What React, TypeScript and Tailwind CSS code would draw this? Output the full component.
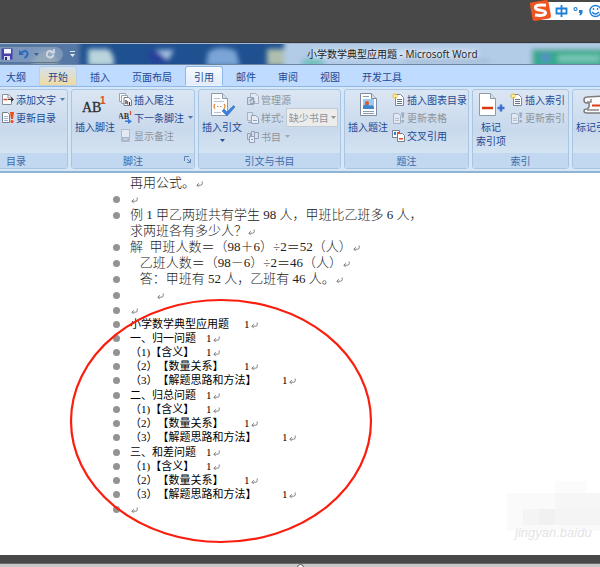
import type { ReactNode } from "react"

const tabs = ["大纲", "开始", "插入", "页面布局", "引用", "邮件", "审阅", "视图", "开发工具"]

const tabStyles: Record<string, string> = {
  开始: "border-[#b9cfe4] bg-gradient-to-b from-[#d3e1f0] to-[#efdb9f]",
  引用: "border-[#8fb8e8] border-b-[#edf4fc] bg-gradient-to-b from-[#f4f9ff] to-[#e3edf9]",
}

const problem = [
  { bullet: false, text: "再用公式。" },
  { bullet: true, text: "" },
  { bullet: true, text: "例 1 甲乙两班共有学生 98 人，甲班比乙班多 6 人，", open: true },
  { bullet: false, text: "求两班各有多少人？" },
  { bullet: true, text: "解  甲班人数＝（98＋6）÷2＝52（人）" },
  { bullet: true, text: "   乙班人数＝（98－6）÷2＝46（人）" },
  { bullet: true, text: "   答：甲班有 52 人，乙班有 46 人。" },
  { bullet: true, text: "        " },
]

const sections = [
  ["一、归一问题", "（1)【含义】", "（2）【数量关系】", "（3）【解题思路和方法】"],
  ["二、归总问题", "（1)【含义】", "（2）【数量关系】", "（3）【解题思路和方法】"],
  ["三、和差问题", "（1)【含义】", "（2）【数量关系】", "（3）【解题思路和方法】"],
]

function Caret({ className = "" }: { className?: string }) {
  return (
    <svg viewBox="0 0 5 3" className={`h-[3px] w-[5px] shrink-0 fill-current ${className}`}>
      <path d="M0 0h5L2.500 3z" />
    </svg>
  )
}

function Return() {
  return (
    <svg viewBox="0 0 7 7" className="ml-px mt-[2px] h-[7px] w-[7px] shrink-0" fill="none" stroke="#757575" strokeWidth="0.900">
      <path d="M6.200 .5v2.200q0 1.500-1.500 1.500H1M2.800 2.200L.8 4.200l2 2" />
    </svg>
  )
}

function Small({ children }: { children: ReactNode }) {
  return (
    <svg viewBox="0 0 13 13" className="h-[13px] w-[13px] shrink-0" fill="none">
      {children}
    </svg>
  )
}

const page = "M3.500 1.500h5l3 3v8h-8z"

function AddTextIcon() {
  return (
    <Small>
      <path d="M1.500 1.500h6l3 3v7h-9z" fill="#fff" stroke="#8a8f98" />
      <path d="M7 1.500v3.500h3" stroke="#8a8f98" />
      <path d="M2.500 6.500h4" stroke="#e04a2a" strokeWidth="1.500" />
      <path d="M7 6.500h4M10.500 4.500l2 2-2 2z" fill="#444" stroke="#444" />
    </Small>
  )
}

function UpdateIcon() {
  return (
    <Small>
      <path d="M1.500 1.500h5l2 2v8h-7z" fill="#fff" stroke="#777f8c" />
      <path d="M3 5.500h4M3 7.500h4M3 9.500h4" stroke="#9fb4d4" />
      <path d="M9 1h4l-1 7h-2z" fill="#ee4a1c" />
      <circle cx="11" cy="10.500" r="1.600" fill="#ee4a1c" />
    </Small>
  )
}

function RefreshOffIcon() {
  return (
    <Small>
      <path d="M1.500 2.500h5l2 2v8h-7z" fill="#e1e8f1" stroke="#a4b2c6" />
      <path d="M3 7.500h4M3 9.500h4" stroke="#b5bfcd" />
      <path d="M9 1.500h3.500l-1 5.500h-1.500zM9.500 9h2.500v2.500H9.500z" fill="#9facc0" />
    </Small>
  )
}

function EndnoteIcon() {
  return (
    <Small>
      <path d="M.5 .5h6v8h-6z" fill="#fff" stroke="#9aa4b3" />
      <path d="M2.500 2.500h6v8h-6z" fill="#fff" stroke="#9aa4b3" />
      <path d="M5 4.500h4.500l3 2.500v5.500H5z" fill="#fff" stroke="#777f8c" />
      <path d="M7 7v4M10.500 9v3" stroke="#333" strokeWidth="1.200" />
      <path d="M8.500 8v3.500" stroke="#e04a2a" strokeWidth="1.200" />
    </Small>
  )
}

function NextNoteIcon() {
  return (
    <Small>
      <text x="-1" y="8" fontSize="8" fontWeight="700" fill="#333" fontFamily="Liberation Serif, serif">AB</text>
      <path d="M11.500 0v4" stroke="#e04a2a" strokeWidth="1.200" />
      <path d="M6 9.500h3v-2l4 3-4 2.500v-2H6z" fill="#3b76d6" />
    </Small>
  )
}

function NotesIcon() {
  return (
    <Small>
      <path d="M2.500 .5h8v12h-8z" fill="#e3e9f2" stroke="#b0bccd" />
      <path d="M3 8h7v4H3z" fill="#a9b7cb" />
      <path d="M4.500 10h4" stroke="#e3eaf3" />
    </Small>
  )
}

function SourcesIcon() {
  return (
    <Small>
      <path d="M4.500 .5h5l3 3v7h-8z" fill="#e3e9f2" stroke="#a4b0c2" />
      <path d="M1.500 4.500h6v7h-6z" fill="#cfd9e6" stroke="#93a2b8" />
      <path d="M4 8.500q2-4 4.500-2M9 8q-2 4-4.500 2" stroke="#93a2b8" strokeWidth="1.500" />
    </Small>
  )
}

function StyleIcon() {
  return (
    <Small>
      <path d="M1.500 1.500h5v8h-5z" fill="#dfe6f0" stroke="#a4b2c6" />
      <path d="M5.500 4.500h4l3 2.500v5.500h-7z" fill="#e6ecf4" stroke="#93a2b8" />
      <path d="M7 9.500h4M2 11.500h3" stroke="#93a2b8" />
    </Small>
  )
}

function BiblioIcon() {
  return (
    <Small>
      <path d="M1.500 3.500h3v6h-3zM5.500 1.500h3v9h-3zM8.500 2.500h4v6h-4z" fill="#d5deea" stroke="#93a2b8" />
      <path d="M3.500 6.500h5v6h-5z" fill="#e3eaf3" stroke="#93a2b8" />
      <path d="M5 9.500h2" stroke="#93a2b8" />
    </Small>
  )
}

function SparkPageIcon() {
  return (
    <Small>
      <path d={page} fill="#fff" stroke="#7c8799" />
      <path d="M5 6.500h5M5 8.500h5M5 10.500h5" stroke="#66758c" />
      <path d="M3 0v6M0 3h6M1 1l4 4M5 1L1 5" stroke="#f0bf22" />
      <circle cx="3" cy="3" r="1.200" fill="#fff2a0" />
    </Small>
  )
}

function CrossRefIcon() {
  return (
    <Small>
      <path d="M.5 1.500h7v7h-7z" fill="#fff" stroke="#777f8c" />
      <path d="M5.500 4.500h5l2 2v6h-7z" fill="#fff" stroke="#777f8c" />
      <path d="M2 3h2v3H2z" fill="#3b76d6" />
      <path d="M5 3h2v2H5zM7 9h4v1.500H7z" fill="#e04a2a" />
    </Small>
  )
}

function FootnoteIcon() {
  return (
    <svg viewBox="0 0 26 30" className="h-[30px] w-[26px]">
      <text x="0" y="22" fontSize="14" fill="#2d2d2d" stroke="#2d2d2d" strokeWidth=".3" fontFamily="Liberation Serif, serif">AB</text>
      <text x="18" y="14" fontSize="10" fontWeight="700" fill="#e04a1c" fontFamily="Liberation Sans, sans-serif">1</text>
    </svg>
  )
}

function CitationIcon() {
  return (
    <svg viewBox="0 0 26 30" className="h-[30px] w-[26px]" fill="none">
      <path d="M2.500 3.500h11l5 5v17h-16z" fill="#fbfcfe" stroke="#8e9aae" />
      <path d="M13.500 3.500v5h5" fill="#d5deeb" stroke="#8e9aae" />
      <path d="M5 8.500h6M5 11.500h10M5 22.500h7" stroke="#b9c4d4" />
      <path d="M6 14q-2 2 0 5M15 14q2 2 0 5M8 16.500h1.500M11 16.500h1.500" stroke="#d98a3a" strokeWidth="1.200" />
      <path d="M13 21l2-2 3 3 6.500-6.500L26 17l-8 9z" fill="#3b82de" stroke="#2a66b8" strokeWidth=".5" />
    </svg>
  )
}

function CaptionIcon() {
  return (
    <svg viewBox="0 0 26 30" className="h-[30px] w-[26px]" fill="none">
      <path d="M5.500 3.500h11l5 5v17h-16z" fill="#fbfcfe" stroke="#7f8ba0" />
      <path d="M16.500 3.500v5h5" fill="#d5deeb" stroke="#7f8ba0" />
      <path d="M8 6.500h6M8 21.500h11M8 23.500h11" stroke="#8f9bae" />
      <path d="M8 9h11v10H8z" fill="#9cc8f2" />
      <path d="M8 19v-3l4-3 3 3 2-1 2 2v2z" fill="#3f86c8" />
      <circle cx="12" cy="13" r="2" fill="#e0592a" />
    </svg>
  )
}

function MarkEntryIcon() {
  return (
    <svg viewBox="0 0 28 30" className="h-[30px] w-[28px]" fill="none">
      <path d="M2.500 3.500h11l5 5v17h-16z" fill="#fff" stroke="#8e9aae" />
      <path d="M13.500 3.500v5h5" fill="#d5deeb" stroke="#8e9aae" />
      <path d="M5 18h11" stroke="#d93a14" strokeWidth="2.500" />
      <path d="M24 14.500v7M20.500 18h7" stroke="#3f6fd0" strokeWidth="2.500" />
    </svg>
  )
}

function MarkCitationIcon() {
  return (
    <svg viewBox="0 0 26 30" className="h-[30px] w-[26px] shrink-0" fill="none">
      <path d="M4 7q-3 0-3 3t3 3h2q1 5-2 6-3 0-3 2t3 2h14q4-1 3-7l-1-4q4 0 3-4-1-2-3-2z" fill="#fbfbfb" stroke="#7d7d7d" strokeWidth="1.500" />
      <path d="M4 12h4V9M4 20h12" stroke="#8a8a8a" strokeWidth="1.500" />
      <path d="M9 15.500h8" stroke="#d9401a" strokeWidth="2" />
    </svg>
  )
}

type ItemProps = { icon: ReactNode; label: string; off?: boolean; menu?: boolean }

function Item({ icon, label, off, menu }: ItemProps) {
  return (
    <button disabled={off} className={`flex h-[18px] items-center gap-[2px] whitespace-nowrap ${off ? "text-[#8f949c]" : "text-[#1e4a94]"}`}>
      {icon}
      <span>{label}</span>
      {menu && <Caret className="ml-[2px] opacity-70" />}
    </button>
  )
}

function Big({ icon, lines, menu }: { icon: ReactNode; lines: string[]; menu?: boolean }) {
  return (
    <button className="flex shrink-0 flex-col items-center whitespace-nowrap text-[#1e4a94]">
      {icon}
      {lines.map((l) => (
        <span key={l} className="block leading-[14px]">{l}</span>
      ))}
      {menu && <Caret className="mt-[5px]" />}
    </button>
  )
}

function Group({ title, className, launcher, children }: { title: string; className: string; launcher?: boolean; children: ReactNode }) {
  return (
    <section className={`flex h-20 shrink-0 flex-col overflow-hidden rounded-[3px] border border-[#a9c5e2] bg-gradient-to-b from-[#dbe6f3] via-[#c9d9ec] to-[#dceaf6] ${className}`}>
      <div className="flex flex-1 items-start gap-1 px-[3px]">{children}</div>
      <h2 className="relative h-[15px] bg-[#c1d8f0] text-center leading-[15px] text-[#3e6aaa]">
        {title}
        {launcher && (
          <button aria-label={title} className="absolute right-[3px] top-[3px]">
            <svg viewBox="0 0 7 7" className="h-[7px] w-[7px]" fill="none" stroke="#5f83b4">
              <path d="M.5 5V.5H5M3 3l3 3M6.500 3v3.500H3" />
            </svg>
          </button>
        )}
      </h2>
    </section>
  )
}

function InputBar() {
  return (
    <div className="absolute right-0 top-0 flex h-[21px] items-center">
      <svg viewBox="0 0 71 21" className="h-[21px] w-[71px]" fill="none">
        <path d="M12 2h59v18H12z" fill="#fff" />
        <path d="M1 4.500Q0 3 2 2.500L17 0q2 0 2.500 2L22 16q0 2-2 2.500L6 21q-2 0-2.500-2z" fill="#ee5420" />
        <path d="M17 5.200Q6 4 6.500 8c.4 3 10 1.500 10 4.800 0 3-6 3-10.500 2.200" stroke="#fff" strokeWidth="3" />
        <path d="M27.500 8.500h10v5h-10zM32.500 5v12" stroke="#1e7fd8" strokeWidth="1.800" />
        <circle cx="46.500" cy="9" r="1.500" stroke="#1e7fd8" strokeWidth="1.200" />
        <path d="M50 10h3.500v2.500q0 2-2.500 3l-.8-1q1-.8 1-1.500H50z" fill="#1e7fd8" />
        <circle cx="66.500" cy="11" r="5.500" stroke="#1e7fd8" strokeWidth="1.400" />
        <path d="M64.500 8v2M68.500 8v2M63 12q3.500 4 7 0" stroke="#1e7fd8" strokeWidth="1.300" />
      </svg>
    </div>
  )
}

function TitleBar() {
  return (
    <div className="relative h-[22px] overflow-hidden border-b border-t border-b-[#70869f] border-t-[#a9b9cd] bg-[#1f5090]">
      <svg viewBox="0 0 600 20" preserveAspectRatio="none" className="absolute inset-0 h-full w-full">
        <defs>
          <filter id="glass" x="-20%" y="-50%" width="140%" height="200%">
            <feGaussianBlur stdDeviation="2.500" />
          </filter>
        </defs>
        <g filter="url(#glass)">
          <path d="M-10-10h90v40H-10z" fill="#5577a6" />
          <path d="M284-10h330v40H284z" fill="#b2cbe7" />
          <path d="M32 20q4-14 20-14l6 14z" fill="#a9b9a4" />
          <path d="M88 5h20q7 5 6 17H88z" fill="#b9d4dc" />
          <path d="M148 7h25l-5 12h-18z" fill="#263f9c" />
          <path d="M156 6h18l-6 10z" fill="#a8c4e6" />
          <path d="M208 8q12-8 28-1l4 15h-34z" fill="#7aa5d6" />
          <path d="M267 5h17v17h-17z" fill="#aebfae" />
          <ellipse cx="313" cy="19" rx="12" ry="5" fill="#71bfc0" />
          <path d="M312 6h166v8H312z" fill="#d3e2f2" />
          <path d="M405 15h85v4h-85z" fill="#a3bad4" />
          <path d="M532 5h80v20h-80z" fill="#35a98d" />
          <path d="M541 9h9v9h-9z" fill="#5590c8" />
          <path d="M558 11h42v7h-42z" fill="#79c6b4" />
        </g>
      </svg>
      <div className="relative flex h-full items-center">
        <div className="flex h-[17px] w-[64px] items-center gap-[6px] rounded-r-full border border-l-0 border-[#5c7699] bg-[#8ca4c4]/70 pl-[1px]">
          <button aria-label="保存">
            <svg viewBox="0 0 12 12" className="h-3 w-3">
              <path d="M.5.5h11v11H.5z" fill="#4b3fa8" />
              <path d="M3 1h7v4.500H3z" fill="#f4f6ff" />
              <path d="M3 8h6v4H3z" fill="#d8dcf0" />
              <path d="M4 9h2v3H4z" fill="#2b2a6a" />
            </svg>
          </button>
          <button aria-label="撤消" className="flex items-center gap-[5px] text-[#375f98]">
            <svg viewBox="0 0 10 10" className="h-[10px] w-[10px]" fill="none" stroke="#2d68bd" strokeWidth="2">
              <path d="M2 4q5-4 6.500 0Q9 7 5.500 9" />
              <path d="M0 1v5h5z" fill="#2d68bd" stroke="none" />
            </svg>
            <Caret />
          </button>
          <button aria-label="重复">
            <svg viewBox="0 0 10 10" className="h-[10px] w-[10px]" fill="none" stroke="#d3d9e4" strokeWidth="1.800">
              <path d="M7.500 3Q4 .5 2 4q-1 4 3 4.500 3 0 3.500-3M5.500 3.500H9V0" />
            </svg>
          </button>
        </div>
        <button aria-label="自定义快速访问工具栏" className="ml-[6px] text-[#dce6f2]">
          <svg viewBox="0 0 5 6" className="h-[6px] w-[5px] fill-current">
            <path d="M0 0h5v1H0zM0 3h5L2.500 6z" />
          </svg>
        </button>
        <h1 className="ml-[232px] whitespace-nowrap font-['Open_Sans','Noto_Sans_CJK_SC',sans-serif] text-[10px] text-[#1c1c1c]">
          小学数学典型应用题 - Microsoft Word
        </h1>
      </div>
    </div>
  )
}

function Line({ bullet = true, className, children }: { bullet?: boolean; className: string; children?: ReactNode }) {
  return (
    <div className={`flex items-center whitespace-pre ${className}`}>
      <span className={`mr-[10px] h-[7px] w-[7px] shrink-0 rounded-full ${bullet ? "bg-[#939393]" : ""}`} />
      {children}
    </div>
  )
}

function TocLine({ text }: { text: string }) {
  return (
    <Line className="h-[14px] text-[11px] font-normal leading-[14px] text-black">
      <span className="[tab-size:38px]">{text + "\t1"}</span>
      <Return />
    </Line>
  )
}

function Document() {
  return (
    <main className="relative flex-1 overflow-hidden bg-white pl-[113px] pt-[2px] font-['Liberation_Serif','Noto_Sans_CJK_SC',serif] font-light [text-spacing-trim:space-all]">
      {problem.map((p, i) => (
        <Line key={i} bullet={p.bullet} className="h-4 text-[13px] leading-4 text-[#222]">
          <span>{p.text}</span>
          {!p.open && <Return />}
        </Line>
      ))}
      <Line className="h-[14px]">
        <Return />
      </Line>
      <TocLine text="小学数学典型应用题" />
      {sections.map((s) => (
        <div key={s[0]} className="pb-px">
          {s.map((t) => (
            <TocLine key={t} text={t} />
          ))}
        </div>
      ))}
      <Line className="h-[14px]">
        <Return />
      </Line>

      {/* red annotation ring over the generated contents */}
      <svg viewBox="0 0 304 246" className="pointer-events-none absolute left-[69px] top-[125px] h-[246px] w-[304px]" fill="none">
        <ellipse cx="152" cy="123" rx="150" ry="121" stroke="#fa1e0e" strokeWidth="2.200" />
      </svg>

      <div className="absolute bottom-[14px] right-0 w-[93px]">
        <svg viewBox="0 0 93 50" className="block h-[50px] w-full">
          <path d="M48 0h31v12H48z" fill="#fbfbfb" />
          <path d="M0 12h93v38H0z" fill="#fafafa" />
          <path d="M48 12h45v16H48z" fill="#f6f6f6" />
          <path d="M16 28h77v16H16z" fill="#f4f4f4" />
          <path d="M32 28h16v16H32z" fill="#f1f1f1" />
        </svg>
        <span className="-mt-[6px] ml-2 block whitespace-nowrap font-['Liberation_Sans',sans-serif] text-[13px] font-normal italic leading-4 text-[#e4e4e4]">
          jingyan.baidu
        </span>
      </div>
    </main>
  )
}

export default function App() {
  return (
    <div lang="zh-CN" className="flex min-h-screen flex-col overflow-hidden bg-[#484848] font-['Noto_Sans_CJK_SC',sans-serif] text-[10px]">
      <header className="relative h-[43px] border-b border-[#33363c]">
        <InputBar />
      </header>
      <TitleBar />

      <nav className="flex h-[22px] items-end overflow-hidden border-b border-[#8fb8e8] bg-[#bfdbff]">
        <div className="-ml-[3px] flex gap-1">
          {tabs.map((t) => (
            <button key={t} className={`h-5 whitespace-nowrap rounded-t-[3px] border px-2 text-[#1e4a94] ${tabStyles[t] ?? "border-transparent"}`}>
              {t}
            </button>
          ))}
        </div>
      </nav>

      <div className="flex gap-[3px] overflow-hidden border-b-2 border-[#8fb3d4] bg-[#d5e7f7] pb-[2px] pt-[2px]">
        <Group title="目录" className="-ml-[36px] w-[104px] pl-[33px] [&>h2]:-ml-[33px]">
          <div>
            <Item icon={<AddTextIcon />} label="添加文字" menu />
            <Item icon={<UpdateIcon />} label="更新目录" />
          </div>
        </Group>
        <Group title="脚注" className="w-[124px]" launcher>
          <Big icon={<FootnoteIcon />} lines={["插入脚注"]} />
          <div>
            <Item icon={<EndnoteIcon />} label="插入尾注" />
            <Item icon={<NextNoteIcon />} label="下一条脚注" menu />
            <Item icon={<NotesIcon />} label="显示备注" off />
          </div>
        </Group>
        <Group title="引文与书目" className="w-[143px]">
          <Big icon={<CitationIcon />} lines={["插入引文"]} menu />
          <div>
            <Item icon={<SourcesIcon />} label="管理源" off />
            <div className="flex h-[19px] items-center gap-[2px] text-[#8f949c]">
              <StyleIcon />
              <label htmlFor="style" className="whitespace-nowrap">样式:</label>
              <div className="relative">
                <select id="style" disabled className="h-[19px] w-[52px] appearance-none border border-[#c3cbd5] bg-[#ececec] pl-[2px] text-[10px] text-[#8f949c] opacity-100">
                  <option>缺少书目</option>
                </select>
                <Caret className="absolute right-[2px] top-2" />
              </div>
            </div>
            <Item icon={<BiblioIcon />} label="书目" off menu />
          </div>
        </Group>
        <Group title="题注" className="w-[125px]">
          <Big icon={<CaptionIcon />} lines={["插入题注"]} />
          <div>
            <Item icon={<SparkPageIcon />} label="插入图表目录" />
            <Item icon={<RefreshOffIcon />} label="更新表格" off />
            <Item icon={<CrossRefIcon />} label="交叉引用" />
          </div>
        </Group>
        <Group title="索引" className="w-[97px]">
          <Big icon={<MarkEntryIcon />} lines={["标记", "索引项"]} />
          <div>
            <Item icon={<SparkPageIcon />} label="插入索引" />
            <Item icon={<RefreshOffIcon />} label="更新索引" off />
          </div>
        </Group>
        <Group title="" className="min-w-[60px] flex-1">
          <Big icon={<MarkCitationIcon />} lines={["标记引文"]} />
        </Group>
      </div>

      <Document />

      <footer className="relative mt-2 h-1 border-t border-[#6a6a6a] bg-[#c8c8c8]">
        <svg viewBox="0 0 7 4" className="mx-auto h-1 w-[7px]" fill="#fff" stroke="#555">
          <circle cx="3.500" cy="3.500" r="3" />
        </svg>
      </footer>
    </div>
  )
}
